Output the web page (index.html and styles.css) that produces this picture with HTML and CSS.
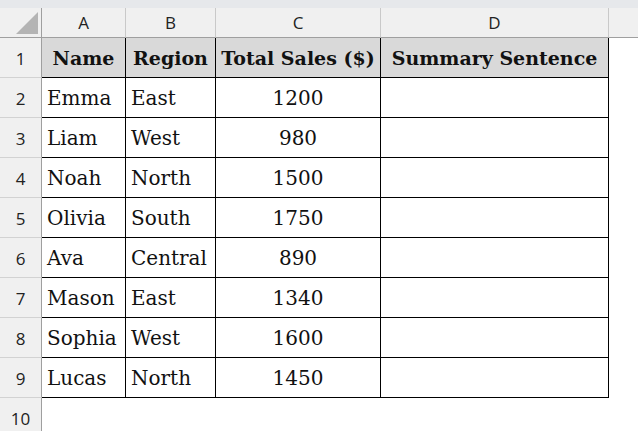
FILE: index.html
```html
<!DOCTYPE html>
<html>
<head>
<meta charset="utf-8">
<link rel="stylesheet" href="styles.css">
</head>
<body>
<div class="topbar"></div>
<div class="sheet">
  <div class="colhead corner"><span class="tri"></span></div>
  <div class="colhead">A</div>
  <div class="colhead">B</div>
  <div class="colhead">C</div>
  <div class="colhead">D</div>
  <div class="colhead rest"></div>

  <div class="rownum">1</div>
  <div class="cell th">Name</div>
  <div class="cell th">Region</div>
  <div class="cell th">Total Sales ($)</div>
  <div class="cell th">Summary Sentence</div>
  <div class="blank"></div>

  <div class="rownum">2</div>
  <div class="cell">Emma</div>
  <div class="cell">East</div>
  <div class="cell num">1200</div>
  <div class="cell"></div>
  <div class="blank"></div>

  <div class="rownum">3</div>
  <div class="cell">Liam</div>
  <div class="cell">West</div>
  <div class="cell num">980</div>
  <div class="cell"></div>
  <div class="blank"></div>

  <div class="rownum">4</div>
  <div class="cell">Noah</div>
  <div class="cell">North</div>
  <div class="cell num">1500</div>
  <div class="cell"></div>
  <div class="blank"></div>

  <div class="rownum">5</div>
  <div class="cell">Olivia</div>
  <div class="cell">South</div>
  <div class="cell num">1750</div>
  <div class="cell"></div>
  <div class="blank"></div>

  <div class="rownum">6</div>
  <div class="cell">Ava</div>
  <div class="cell">Central</div>
  <div class="cell num">890</div>
  <div class="cell"></div>
  <div class="blank"></div>

  <div class="rownum">7</div>
  <div class="cell">Mason</div>
  <div class="cell">East</div>
  <div class="cell num">1340</div>
  <div class="cell"></div>
  <div class="blank"></div>

  <div class="rownum">8</div>
  <div class="cell">Sophia</div>
  <div class="cell">West</div>
  <div class="cell num">1600</div>
  <div class="cell"></div>
  <div class="blank"></div>

  <div class="rownum">9</div>
  <div class="cell">Lucas</div>
  <div class="cell">North</div>
  <div class="cell num">1450</div>
  <div class="cell"></div>
  <div class="blank"></div>

  <div class="rownum last">10</div>
  <div class="blank"></div>
  <div class="blank"></div>
  <div class="blank"></div>
  <div class="blank"></div>
  <div class="blank"></div>
</div>
</body>
</html>
```

FILE: styles.css
```css
* { box-sizing: border-box; }
html, body { margin: 0; padding: 0; background: #ffffff; overflow: hidden; }
body { width: 638px; height: 431px; }

.topbar { height: 8px; background: #e6e8eb; }

.sheet {
  display: grid;
  grid-template-columns: 42px 84px 90px 165px 228px 29px;
  grid-template-rows: 30px repeat(10, 40px);
}

.colhead {
  background: #f0f0f0;
  border-right: 1px solid #c9c9c9;
  border-bottom: 1px solid #9f9f9f;
  font-family: "Open Sans", "Noto Sans", sans-serif;
  font-size: 17px;
  color: #222;
  text-align: center;
  line-height: 30px;
}
.colhead.rest { border-right: none; }
.colhead.corner { position: relative; border-right: 1px solid #9f9f9f; }
.tri {
  position: absolute;
  right: 3px;
  bottom: 3px;
  width: 0;
  height: 0;
  border-style: solid;
  border-width: 0 0 22px 22px;
  border-color: transparent transparent #b4b4b4 transparent;
}

.rownum {
  background: #f0f0f0;
  border-right: 1px solid #9f9f9f;
  border-bottom: 1px solid #d2d2d2;
  font-family: "Open Sans", "Noto Sans", sans-serif;
  font-size: 17px;
  color: #222;
  text-align: center;
  line-height: 41px;
}
.rownum.last { border-bottom: none; }

.cell {
  border-right: 1px solid #000;
  border-bottom: 1px solid #000;
  font-family: "DejaVu Serif", serif;
  font-size: 20px;
  color: #111;
  line-height: 41px;
  padding-left: 5px;
  white-space: nowrap;
  overflow: hidden;
}
.cell.th {
  background: #d9d9d9;
  font-weight: bold;
  font-size: 19px;
  text-align: center;
  padding-left: 0;
}
.cell.num { text-align: center; padding-left: 0; }

.blank { background: #fff; }
```
